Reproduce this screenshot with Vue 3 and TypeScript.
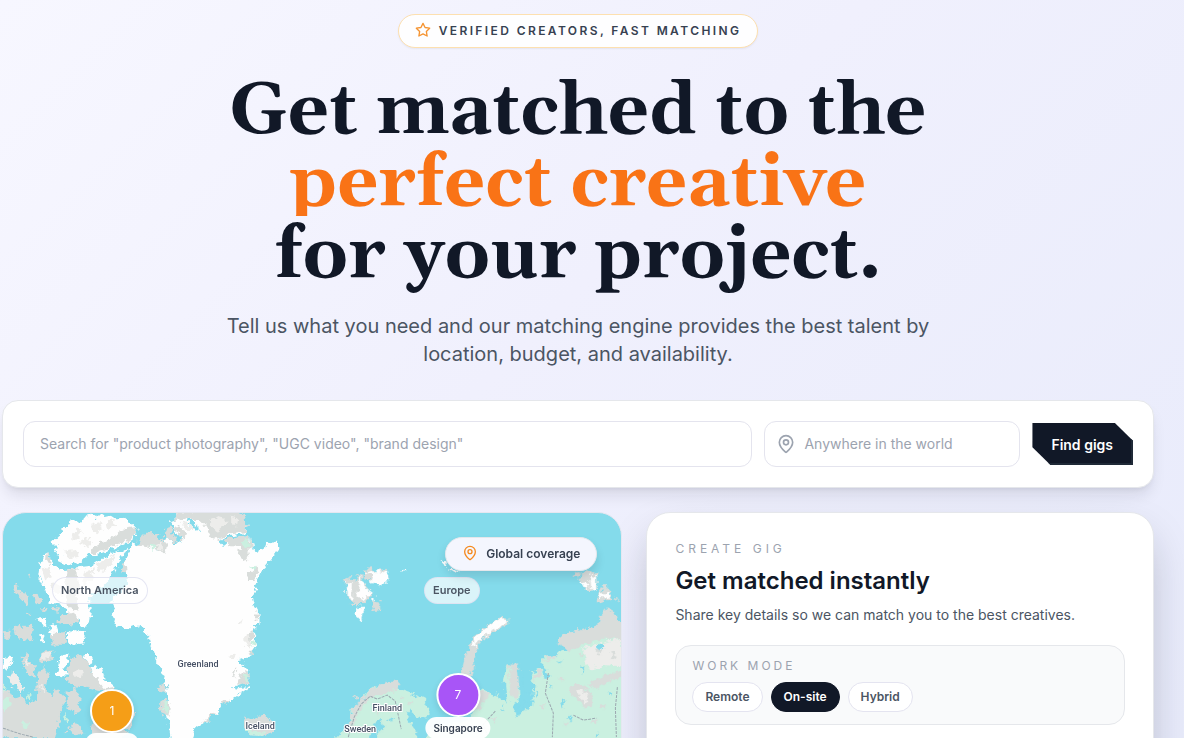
<script setup lang="ts">
import { ref } from 'vue'

const query = ref('')
const place = ref('')
const modes = ['Remote', 'On-site', 'Hybrid'] as const
const mode = ref<(typeof modes)[number]>('On-site')

const countries = [
  { name: 'Greenland', x: 195, y: 151 },
  { name: 'Iceland', x: 257, y: 213 },
  { name: 'Finland', x: 384, y: 195 },
  { name: 'Sweden', x: 357, y: 216 },
]
</script>

<template>
  <main class="page">
    <section class="hero">
      <p class="badge">
        <svg class="star" viewBox="0 0 24 24" aria-hidden="true">
          <path d="M12 2l3.09 6.26L22 9.27l-5 4.87 1.18 6.88L12 17.77l-6.18 3.25L7 14.14 2 9.27l6.91-1.01z" />
        </svg>
        Verified creators, fast matching
      </p>
      <h1>
        Get matched to the
        <span>perfect creative</span>
        for your project.
      </h1>
      <p class="lead">Tell us what you need and our matching engine provides the best talent by location, budget, and availability.</p>
    </section>

    <form class="search" @submit.prevent>
      <input v-model="query" class="field" type="text" aria-label="Search gigs" placeholder="Search for &quot;product photography&quot;, &quot;UGC video&quot;, &quot;brand design&quot;" />
      <label class="field place">
        <svg class="pin" viewBox="0 0 24 24" aria-hidden="true">
          <path d="M20 10c0 5-5.500 10.200-7.400 11.800a1 1 0 0 1-1.200 0C9.500 20.200 4 15 4 10a8 8 0 0 1 16 0" />
          <circle cx="12" cy="10" r="3" />
        </svg>
        <input v-model="place" type="text" aria-label="Location" placeholder="Anywhere in the world" />
      </label>
      <button class="find" type="submit">Find gigs</button>
    </form>

    <div class="columns">
      <section class="map" aria-label="Coverage map">
        <svg class="land" viewBox="0 0 618 300" preserveAspectRatio="xMidYMin slice" aria-hidden="true">
          <defs>
            <filter id="coast" x="0" y="0" width="100%" height="100%" color-interpolation-filters="sRGB">
              <feTurbulence type="fractalNoise" baseFrequency="0.17" numOctaves="3" seed="4" result="n" />
              <feDisplacementMap in="SourceGraphic" in2="n" scale="9" xChannelSelector="R" yChannelSelector="G" />
            </filter>
          </defs>
          <g filter="url(#coast)">
            <g transform="translate(-3 -8) scale(0.33333)">
              <path class="ice" d="M155 110 175 90 190 70 205 65 215 50 240 45 255 35 275 32 290 40 305 30 330 27 350 40 375 38 400 60 413 75 408 92 385 110 350 128 320 138 290 150 265 150 240 172 215 180 190 175 170 165 180 150 165 140 170 125Z" />
              <path class="rock" d="M340 95 375 70 410 66 412 85 380 108 335 125 290 143 272 146 280 128 305 112Z" />
              <path class="frost" d="M210 95 235 70 245 85 225 105Z M270 60 300 55 310 72 290 85Z M190 140 225 135 240 155 205 160Z M320 50 340 45 345 65 325 75Z M240 110 265 95 275 110 250 130Z" />
              <path class="ice" d="M385 128 370 150 345 185 335 215 310 240 290 260 270 270 272 320 265 360 245 365 235 340 205 330 185 300 150 290 135 250 115 210 120 175 140 140 155 160 165 190 190 195 235 190 270 185 310 160 345 140Z" />
              <path class="rock" d="M200 193 232 193 236 240 232 320 205 310 195 250Z M140 140 155 162 150 185 138 165Z M180 330 225 322 232 350 210 360 175 350Z" />
              <path class="frost" d="M290 178 350 148 320 195 295 205Z M250 200 285 190 275 225 250 240Z M125 190 150 185 155 215 135 225Z M150 240 180 235 185 270 160 270Z" />
              <path class="rock" d="M362 190 380 165 395 150 408 170 404 205 370 205Z M410 130 418 100 440 85 478 84 480 125 440 150 412 145Z" />
              <path class="rock" d="M38 245 50 240 58 258 78 262 88 290 78 300 60 280 42 260Z M98 270 112 262 124 290 112 300Z M84 205 93 203 90 217Z M118 310 138 308 140 320 120 316Z M158 305 180 308 176 320 160 318Z M80 320 92 322 88 336Z M40 370 60 355 70 375 95 350 102 372 90 405 60 400 45 388Z M10 375 32 378 25 405 10 402Z M62 460 85 440 90 475 108 478 100 512 80 500Z M120 440 155 436 160 460 140 475 125 470Z M115 500 135 480 145 510 140 560 155 570 170 550 195 580 185 610 165 699 0 699 0 560 25 555 40 580 65 570 78 595 110 590Z M210 460 245 448 262 470 275 500 300 520 320 540 350 545 330 562 285 555 255 545 225 550 200 520Z M200 560 225 550 242 580 235 620 215 620 200 600Z M275 655 320 620 380 680 330 720 270 720Z M200 680 225 650 250 680 230 690Z M385 600 402 625 398 660 380 675Z" />
              <path class="ice" d="M112 338 130 335 142 360 130 365 115 352Z M118 392 132 388 138 410 122 415Z M200 390 225 375 255 385 250 415 210 420Z M145 365 170 360 180 390 155 390Z M170 505 180 455 195 445 208 450 195 480 200 510 180 518Z M250 450 275 450 285 470 265 475Z M270 490 300 480 315 520 345 545 315 550 290 520Z M12 455 30 448 38 465 20 500 10 490Z" />
              <path class="frost" d="M20 510 42 500 70 545 72 570 45 550Z M120 445 155 440 145 462 130 465Z M222 500 240 490 248 510 230 520Z M70 470 84 460 84 485Z M118 540 135 545 130 560Z" />
              <path class="rock" d="M150 388 195 380 200 420 160 418Z" />
              <path class="green" d="M5 590 20 575 35 595 12 625Z M75 580 90 568 98 588Z M192 622 203 640 195 655Z M62 650 75 642 84 662 67 670Z M5 530 18 545 10 565Z" />
            </g>
            <g transform="translate(147 -8) scale(0.33333)">
              <path class="ice" d="M78 15 80 42 62 50 78 85 95 100 75 120 50 100 30 130 0 130 -55 115 -75 165 -65 240 -120 290 -105 310 -120 330 -100 345 -105 365 -75 370 -50 360 -20 370 -5 390 10 440 20 475 35 500 50 540 55 580 45 610 55 650 65 720 125 720 135 670 165 650 200 625 215 600 260 575 295 550 275 545 298 535 295 500 290 480 270 465 300 450 315 430 318 390 305 360 325 360 325 325 308 295 305 265 318 250 320 225 330 205 345 185 360 165 388 130 383 115 350 110 345 125 320 140 305 130 300 95 270 95 215 120 210 110 245 90 290 85 295 60 270 28 270 15Z" />
              <path class="rock" d="M160 15 270 15 295 60 290 78 245 85 210 105 185 95 165 60 120 38 80 45 80 25Z M45 75 62 70 80 110 70 115 45 95Z M75 65 90 60 110 95 95 105Z M0 90 15 85 22 108 38 95 50 110 48 140 0 120Z M220 105 270 95 300 95 302 140 280 172 262 150 268 122 235 120Z M285 215 318 185 325 200 310 225 290 225Z M290 390 310 375 315 400 295 420Z M245 510 262 495 255 520Z M275 500 300 505 295 538 260 535Z M20 545 45 535 52 560 30 565Z M30 590 45 580 62 600 58 635 35 625Z M155 650 200 620 180 645Z M305 325 322 325 320 345Z M295 440 310 440 302 455Z M215 590 240 580 225 600Z" />
              <path class="frost" d="M175 45 215 30 235 55 200 80Z M240 35 262 38 258 62 240 52Z M285 400 295 385 300 430 288 425Z M95 50 120 55 135 75 110 75Z M10 120 35 115 40 135Z M262 350 275 345 270 360Z M235 450 255 445 245 465Z" />
              <path class="sea" d="M108 40 128 42 150 78 138 76Z M205 110 240 92 292 88 270 96 235 100 212 118Z M22 82 28 86 40 108 30 106Z M62 68 72 74 98 108 88 106Z M245 545 285 535 292 545 258 550Z M265 462 285 470 300 490 290 492Z" />
              <path class="green" d="M278 105 298 105 292 130 280 125Z M40 590 52 590 56 625 42 625Z M278 507 296 512 293 533 282 525Z M300 185 315 180 312 200Z M0 125 15 122 8 138Z M300 415 316 408 312 425Z" />
              <path class="rock" d="M280 650 285 632 305 645 325 635 345 632 370 655 372 680 340 692 300 690 285 675Z" />
              <path class="green" d="M280 670 300 675 345 680 330 692 300 690Z" />
            </g>
            <g transform="translate(297 -8) scale(0.33333)">
              <path class="rock" d="M128 225 150 215 165 230 175 210 190 212 190 235 215 265 195 290 178 300 152 300 160 290 138 275 140 245Z M195 200 210 185 222 200 245 190 265 200 262 222 235 242 215 225 195 220Z M215 290 235 288 242 315 220 318Z" />
              <path class="ice" d="M178 215 190 225 192 245 215 260 190 285 172 275Z M136 235 158 235 157 283 140 272Z M160 325 172 305 192 305 182 350Z M212 228 225 192 268 203 258 232 232 245Z M195 208 220 198 220 218Z M305 197 320 192 318 203Z M425 175 440 165 438 182Z M440 190 475 195 470 208Z M210 278 222 272 224 285 212 288Z" />
              <path class="green" d="M90 720 135 672 150 640 155 610 185 585 195 565 220 545 260 540 300 555 330 565 370 580 388 615 380 640 340 630 325 615 320 640 345 670 355 720 90 720Z" />
              <path class="rock" d="M185 580 215 550 260 530 295 530 300 550 260 560 210 580 190 600 165 645 150 640 160 605Z M160 575 175 572 172 585Z M140 650 165 640 160 665Z M250 600 262 596 258 608Z M300 570 312 575 304 582Z M225 620 235 616 232 628Z M325 590 338 592 330 600Z" />
              <path class="sea" d="M205 720 218 655 240 645 250 665 228 690 222 720Z M290 600 297 598 295 608Z M270 640 278 636 276 648Z" />
            </g>
            <g transform="translate(447 -8) scale(0.33333)">
              <path class="rock" d="M155 335 174 338 174 358 140 377 92 403 80 430 72 480 55 530 25 520 45 450 63 430 63 400 100 368Z" />
              <path class="ice" d="M152 340 172 342 167 356 115 382 85 407 70 425 68 402 100 372Z" />
              <path class="green" d="M530 380 440 400 330 440 320 450 275 455 280 490 300 510 285 525 270 490 240 500 250 540 245 600 200 630 185 600 210 580 208 490 175 475 160 520 165 575 175 595 140 570 90 555 60 640 -60 670 -80 720 540 720 540 380Z" />
              <path class="rock" d="M530 400 440 405 390 425 350 440 320 405 345 385 410 370 450 355 450 330 470 310 495 325 500 345 530 345Z M175 475 205 475 210 510 200 580 184 570 182 540 178 520Z M90 560 118 565 85 615 65 610Z M360 545 395 540 425 570 425 605 402 610 380 580 355 562Z M410 540 455 515 530 490 530 505 470 532 440 552Z M275 455 325 450 290 470Z M250 505 270 492 268 515 250 525Z M362 208 380 198 386 222Z M388 203 415 195 438 208 440 260 398 252Z M436 294 455 255 460 238 484 262 482 282 450 295Z M492 280 504 285 500 293Z M385 445 398 442 392 455Z M325 520 340 515 335 530Z M270 600 285 596 276 612Z M450 600 468 590 460 610Z M340 660 352 650 350 668Z M420 650 440 640 432 660Z M120 640 135 632 130 650Z" />
              <path class="frost" d="M380 555 400 552 415 585 400 592Z M395 430 430 420 510 400 530 485 460 480 415 490 405 460Z" />
              <path class="rock" d="M430 430 460 435 445 450Z M480 440 500 450 485 460Z" />
              <path class="ice" d="M390 232 412 228 414 250 400 252Z M420 208 437 213 437 262 422 258Z M452 265 482 265 474 278 450 276Z" />
              <path class="sea" d="M435 425 445 413 462 425 447 437Z M203 490 217 490 219 560 247 570 247 592 221 582 221 620 195 635 209 600Z M325 590 345 585 335 610Z M390 480 402 490 395 500Z M475 560 485 565 478 575Z M255 560 265 565 258 572Z M350 640 360 635 362 655Z M300 540 308 536 306 548Z M150 610 158 604 158 616Z M430 690 440 682 440 699Z M320 470 335 465 330 478Z" />
            </g>
          </g>
          <g class="border">
            <path d="M345 224 351 204 358 191 367 183 374 186 384 182 392 188 398 216 M492 198 480 211 484 222 M545 160 542 180 550 200 549 224 M614 174 612 195 613 224 M570 202 580 207 593 205 M0 215 18 221 30 224" />
          </g>
          <text v-for="c in countries" :key="c.name" class="country" :x="c.x" :y="c.y" dominant-baseline="central">{{ c.name }}</text>
        </svg>

        <span class="region america">North America</span>
        <span class="region europe">Europe</span>
        <div class="coverage">
          <svg class="pin" viewBox="0 0 24 24" aria-hidden="true">
            <path d="M20 10c0 5-5.500 10.200-7.400 11.800a1 1 0 0 1-1.200 0C9.500 20.200 4 15 4 10a8 8 0 0 1 16 0" />
            <circle cx="12" cy="10" r="3" />
          </svg>
          Global coverage
        </div>
        <div class="marker amber"><button type="button" aria-label="1 creator">1</button><i class="tag" /></div>
        <div class="marker violet"><button type="button">7</button><span class="tag">Singapore</span></div>
      </section>

      <section class="gig">
        <p class="eyebrow">Create gig</p>
        <h2>Get matched instantly</h2>
        <p class="hint">Share key details so we can match you to the best creatives.</p>
        <div class="mode" role="group" aria-labelledby="mode-title">
          <p id="mode-title" class="mode-title">Work mode</p>
          <div class="pills">
            <button v-for="m in modes" :key="m" type="button" :class="{ active: m === mode }" :aria-pressed="m === mode" @click="mode = m">{{ m }}</button>
          </div>
        </div>
      </section>
    </div>
  </main>
</template>

<style>
body { margin: 0; }
</style>

<style scoped>
* { box-sizing: border-box; }
.page {
  height: 100vh;
  overflow: hidden;
  padding: 14px 30px 0 2px;
  background: linear-gradient(135deg, #f7f7ff 0%, #f0f0fd 45%, #e8ebfb 100%);
  color: #111827;
  font-family: Inter, "Liberation Sans", sans-serif;
}
p, h1, h2 { margin: 0; }
button, input { font-family: inherit; }
svg { display: block; }
.hero { display: flex; flex-direction: column; align-items: center; text-align: center; }
.badge {
  display: flex; align-items: center; gap: 8px; height: 34px; padding: 0 16px 2px;
  border: 1px solid #fde0b0; border-radius: 17px; background: #fefeff;
  box-shadow: 0 1px 2px rgba(17, 24, 39, .06);
  color: #374151; font-size: 12px; font-weight: 600; letter-spacing: 2.4px; text-transform: uppercase;
}
.star { width: 16px; height: 16px; fill: none; stroke: #f59432; stroke-width: 2; stroke-linejoin: round; }
h1 { margin-top: 28px; font-family: Georgia, Gelasio, "Liberation Serif", serif; font-size: 72px; line-height: 72px; font-weight: 700; }
h1 span { display: block; color: transparent; background: linear-gradient(#f97316, #f97316) top / 100% 68px no-repeat; background-clip: text; -webkit-background-clip: text; }
.lead { max-width: 768px; margin-top: 20px; color: #4b5563; font-size: 20px; line-height: 28px; }
.search {
  display: flex; align-items: center; gap: 12px; margin-top: 32px; padding: 20px;
  border: 1px solid #e5e7eb; border-radius: 16px; background: #fff;
  box-shadow: 0 10px 15px -3px rgba(17, 24, 39, .1), 0 4px 6px -4px rgba(17, 24, 39, .1);
}
.field { height: 46px; border: 1px solid #e4e4ee; border-radius: 12px; background: #fff; }
input { min-width: 0; color: #111827; font-size: 14px; outline: 0; }
input::placeholder { color: #9ca3af; opacity: 1; }
input.field { flex: 1; padding: 0 16px 2px; }
.place { display: flex; align-items: center; gap: 8px; width: 256px; padding: 0 12px; }
.place input { flex: 1; padding: 0 0 2px; border: 0; background: none; }
.pin { flex: none; width: 20px; height: 20px; fill: none; stroke: #9ca3af; stroke-width: 2; stroke-linecap: round; stroke-linejoin: round; }
.place .pin { margin-left: -1px; }
.find {
  height: 42px; padding: 0 20px 0 19px; border: 0; background: #111827; color: #fff;
  box-shadow: inset -2px -2px #1f2937;
  clip-path: polygon(0 0, 82% 0, 100% 42%, 100% 100%, 18% 100%, 0 58%);
  font-size: 14px; font-weight: 600;
}
.columns { display: grid; grid-template-columns: 11fr 9fr; gap: 24px; margin-top: 24px; }
.map {
  position: relative; min-height: 520px; overflow: hidden; border: 1px solid #e5e7f0; border-radius: 24px;
  background: #84dbeb;
}
.land { width: 100%; }
.ice { fill: #fefefe; }
.frost { fill: #ededeb; }
.rock { fill: #d9dddb; }
.green { fill: #caf0e0; }
.sea { fill: #84dbeb; }
.border path { fill: none; stroke: #9ca8b0; stroke-width: 1; stroke-dasharray: 3 1; }
.country { fill: #465064; stroke: #fff; stroke-width: 2; paint-order: stroke; font-family: Roboto, sans-serif; font-size: 9px; font-weight: 500; text-anchor: middle; }
.region, .coverage, .marker { position: absolute; }
.region {
  top: 64px; height: 27px; padding: 0 8px; border: 1px solid rgba(222, 224, 240, .8); border-radius: 14px;
  background: rgba(255, 255, 255, .7); color: #4b5563; font-size: 11px; line-height: 25px; font-weight: 600;
}
.america { left: 49px; }
.europe { left: 421px; }
.coverage {
  top: 24px; right: 24px; display: flex; align-items: center; gap: 8px; height: 34px; padding: 0 16px 2px;
  border: 1px solid #e5e7eb; border-radius: 17px; background: rgba(250, 248, 255, .95);
  box-shadow: 0 6px 10px rgba(17, 24, 39, .12); color: #374151; font-size: 12px; font-weight: 600;
}
.coverage .pin { width: 16px; height: 16px; stroke: #f58a1f; }
.marker { display: flex; flex-direction: column; align-items: center; transform: translateX(-50%); }
.marker button { width: 44px; height: 44px; padding: 0 0 1px; border: 2px solid #fff; border-radius: 50%; color: #fff; font-size: 12px; box-shadow: 0 3px 6px rgba(17, 24, 39, .12); }
.tag { min-width: 54px; min-height: 22px; padding: 0 8px; border-radius: 11px; background: rgba(255, 255, 255, .95); color: #374151; font-size: 10px; line-height: 22px; font-weight: 600; }
.amber { top: 176px; left: 109px; }
.amber button { background: #f59e17; }
.violet { top: 160px; left: 455px; }
.violet button { background: #a855f7; }
.gig {
  padding: 28px; border: 1px solid #e5e7eb; border-radius: 24px; background: #fff;
  box-shadow: 0 20px 44px -8px rgba(17, 24, 39, .28);
}
.eyebrow, .mode-title { color: #9ca3af; font-size: 12px; line-height: 16px; text-transform: uppercase; }
.eyebrow { letter-spacing: 4px; }
.mode-title { letter-spacing: 3px; }
h2 { margin-top: 8px; font-size: 24px; line-height: 32px; font-weight: 600; }
.hint { margin-top: 8px; color: #4b5563; font-size: 14px; line-height: 20px; }
.mode { margin-top: 20px; padding: 12px 16px; border: 1px solid #e5e7eb; border-radius: 16px; background: #f9fafb; }
.pills { display: flex; gap: 8px; margin-top: 8px; }
.pills button { height: 30px; padding: 0 12px 2px; border: 1px solid #e4e4f0; border-radius: 15px; background: #fff; color: #4b5563; font-size: 12px; font-weight: 600; }
.pills .active { border-color: #111827; background: #111827; color: #fff; }
</style>
